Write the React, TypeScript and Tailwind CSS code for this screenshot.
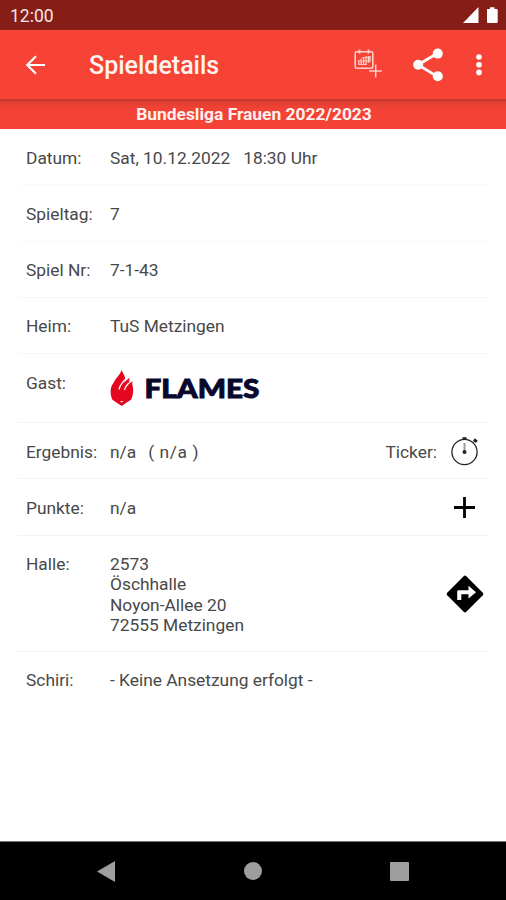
import React from 'react'

interface RowProps {
  label: string
  height?: string
  border?: string
  action?: React.ReactNode
  children: React.ReactNode
}

function Row({
  label,
  height = 'h-[56.3px]',
  border = 'border-b border-[#f3f3f3]',
  action,
  children,
}: RowProps) {
  return (
    <div className={`flex shrink-0 pl-[8px] pt-[18.5px] ${height} ${border}`}>
      <div className="w-[84px] shrink-0 whitespace-nowrap">{label}</div>
      <div className="grow whitespace-pre">{children}</div>
      {action}
    </div>
  )
}

function BackIcon() {
  return (
    <svg className="ml-[25px] shrink-0" width="21" height="20" viewBox="0 0 21 20" fill="none" stroke="white" strokeWidth="2.2">
      <path d="M20 10H2.5M11 1.2L2.2 10L11 18.8" />
    </svg>
  )
}

function CalendarAddIcon() {
  return (
    <svg width="30" height="30" viewBox="0 0 30 30" fill="none" stroke="#ffd0cb">
      <rect x="1.2" y="2.7" width="17.6" height="16.6" rx="1.5" strokeWidth="1.6" />
      <path d="M5.5 0.5v4M14.5 0.5v4" strokeWidth="1.8" />
      <path d="M4.8 11v5M7.2 9.5v6.5M9.6 8v8M12 7v9M14.4 7v7M16 7v5.5" strokeWidth="1.3" />
      <path d="M4 15.5h9M4.5 12h12M8 8.5h8.5" strokeWidth="0.8" />
      <path d="M21.7 15.5v13M15.2 22h12.6" strokeWidth="1.5" />
    </svg>
  )
}

function ShareIcon() {
  return (
    <svg width="30" height="34" viewBox="0 0 30 34" fill="white" stroke="white">
      <path d="M24.5 5.2L5 16.8L24.5 28.6" fill="none" strokeWidth="2.8" />
      <circle cx="24.8" cy="5.6" r="5" stroke="none" />
      <circle cx="5.2" cy="16.8" r="5" stroke="none" />
      <circle cx="24.8" cy="28.3" r="5" stroke="none" />
    </svg>
  )
}

function StopwatchIcon() {
  return (
    <svg width="30" height="30" viewBox="0 0 30 30" fill="none" stroke="#222">
      <circle cx="14.5" cy="16" r="12.6" strokeWidth="1.3" />
      <path d="M14.5 7v7" stroke="#999" strokeWidth="2" />
      <circle cx="14.5" cy="16" r="2" fill="#222" stroke="none" />
      <path d="M12.5 2.6h4" strokeWidth="2.8" />
      <path d="M24 3.4l2.8 2.5" strokeWidth="3" />
      <path d="M22.7 7l2-2" strokeWidth="1" />
    </svg>
  )
}

function DirectionsIcon() {
  return (
    <svg width="38" height="38" viewBox="0 0 38 38">
      <path d="M17.7 1.2Q19 0 20.3 1.2L36.8 17.7Q38 19 36.8 20.3L20.3 36.8Q19 38 17.7 36.8L1.2 20.3Q0 19 1.2 17.7Z" fill="black" />
      <path d="M11.2 25V16.2q0-1 1-1h10.3v-4.4L30 17.2l-7.5 6.4v-4.3h-7.2V25z" fill="white" />
    </svg>
  )
}

function FlamesLogo() {
  return (
    <svg width="151" height="38" viewBox="0 0 151 38">
      <path
        d="M11.8 0C12 2.5 14.8 4.5 15 8C15.2 10 14.2 11.5 13 13.2L19.8 7.6C18.8 10.2 19.4 11.6 19.2 13.8L22.6 11C21.4 14 23.4 16.5 23.2 20.5C23.1 23.5 22.5 26.8 21 29.8L15.5 33.2L11.8 36L7.5 33.2L2.4 29.8C1 26.5 0.5 23.5 0.6 20.5C0.8 16 3.2 13.5 4.8 10.5C6.4 7.5 9.8 5 11.8 0Z"
        fill="#e5071f"
      />
      <path d="M14.6 9.5C13 13 9.6 14.5 9 19.5M18.8 13C16.8 15.5 14.8 16.5 14.6 20" fill="none" stroke="white" strokeWidth="1.3" />
      <path d="M9.8 31h3.8l-1.9 1.5z" fill="white" />
      <text
        x="34.5"
        y="27.7"
        textLength="115"
        lengthAdjust="spacingAndGlyphs"
        fill="#08082c"
        stroke="#08082c"
        strokeWidth="0.9"
        className="font-['Lato',sans-serif] text-[26px] font-black"
      >
        FLAMES
      </text>
    </svg>
  )
}

export default function App() {
  return (
    <div className="flex h-[900px] w-[506px] flex-col overflow-hidden bg-white font-['Roboto',sans-serif]">
      {/* Status bar */}
      <div className="flex h-[30px] shrink-0 items-center justify-between bg-[#861d17] pl-[10px] pr-[8px] text-white">
        <span className="pt-[4px] text-[17.5px] leading-none text-[#f5e6e5]">12:00</span>
        <svg width="36" height="18" viewBox="0 0 36 18" fill="white">
          <path d="M1 17L16.5 1V17Z" />
          <path d="M25 3h3V1.2h4.5V3h2.2q1 0 1 1v12q0 1-1 1H26q-1 0-1-1z" />
        </svg>
      </div>

      {/* App bar */}
      <header className="flex h-[69px] shrink-0 items-center bg-[#f64335]">
        <BackIcon />
        <h1 className="ml-[43px] grow pt-[2px] text-[25px] font-medium leading-none text-[#fff3f1]">Spieldetails</h1>
        <div className="-mt-[2px]">
          <CalendarAddIcon />
        </div>
        <div className="ml-[29px]">
          <ShareIcon />
        </div>
        <svg className="ml-[33.5px] mr-[24px]" width="6" height="22" viewBox="0 0 6 22" fill="white">
          <circle cx="3" cy="3" r="2.8" />
          <circle cx="3" cy="10.7" r="2.8" />
          <circle cx="3" cy="18.4" r="2.8" />
        </svg>
      </header>

      <div className="flex h-[30px] shrink-0 justify-center bg-[linear-gradient(#bd382d_0px,#dc3e31_3px,#ed4134_7px,#f44336_12px)] pt-[5px] pl-[2px] text-[17.4px] font-bold leading-[20px] text-[#fff1ef]">
        Bundesliga Frauen 2022/2023
      </div>

      {/* Match details */}
      <main className="flex grow flex-col px-[18px] text-[17.35px] leading-[20.2px] text-[#484848]">
        <Row label="Datum:" border="border-b border-[#fafafa]">{'Sat, 10.12.2022   18:30 Uhr'}</Row>
        <Row label="Spieltag:" border="border-b border-[#fafafa]">7</Row>
        <Row label="Spiel Nr:" border="border-b border-[#f7f7f7]">7-1-43</Row>
        <Row label="Heim:" border="border-b border-[#f7f7f7]">TuS Metzingen</Row>
        <Row label="Gast:" height="h-[69px]">
          <div className="-mt-[2.5px]">
            <FlamesLogo />
          </div>
        </Row>
        <Row
          label="Ergebnis:"
          action={
            <div className="flex pr-[8px]">
              <span>Ticker:</span>
              <div className="-mt-[6px] ml-[13px]">
                <StopwatchIcon />
              </div>
            </div>
          }
        >
          n/a
          <span className="ml-[12px] tracking-[0.6px]">( n/a )</span>
        </Row>
        <Row
          label="Punkte:"
          action={
            <svg className="mr-[13px] -mt-px" width="21" height="21" viewBox="0 0 21 21" stroke="black" strokeWidth="2.8">
              <path d="M10.5 0v21M0 10.5h21" />
            </svg>
          }
        >
          n/a
        </Row>
        <Row
          label="Halle:"
          height="h-[116.2px]"
          action={
            <div className="mr-[4px] mt-[21px]">
              <DirectionsIcon />
            </div>
          }
        >
          <p>2573</p>
          <p>Öschhalle</p>
          <p>Noyon-Allee 20</p>
          <p>72555 Metzingen</p>
        </Row>
        <Row label="Schiri:" border="">- Keine Ansetzung erfolgt -</Row>
      </main>

      {/* Navigation bar */}
      <nav className="flex h-[59px] shrink-0 items-center justify-between border-t border-[#777] bg-black pl-[97px] pr-[97px]">
        <svg width="18" height="21" viewBox="0 0 18 21" fill="#9e9e9e">
          <path d="M0 10.5L18 0V21Z" />
        </svg>
        <div className="size-[18px] rounded-full bg-[#9e9e9e]" />
        <div className="size-[19px] rounded-[1px] bg-[#9e9e9e]" />
      </nav>
    </div>
  )
}
